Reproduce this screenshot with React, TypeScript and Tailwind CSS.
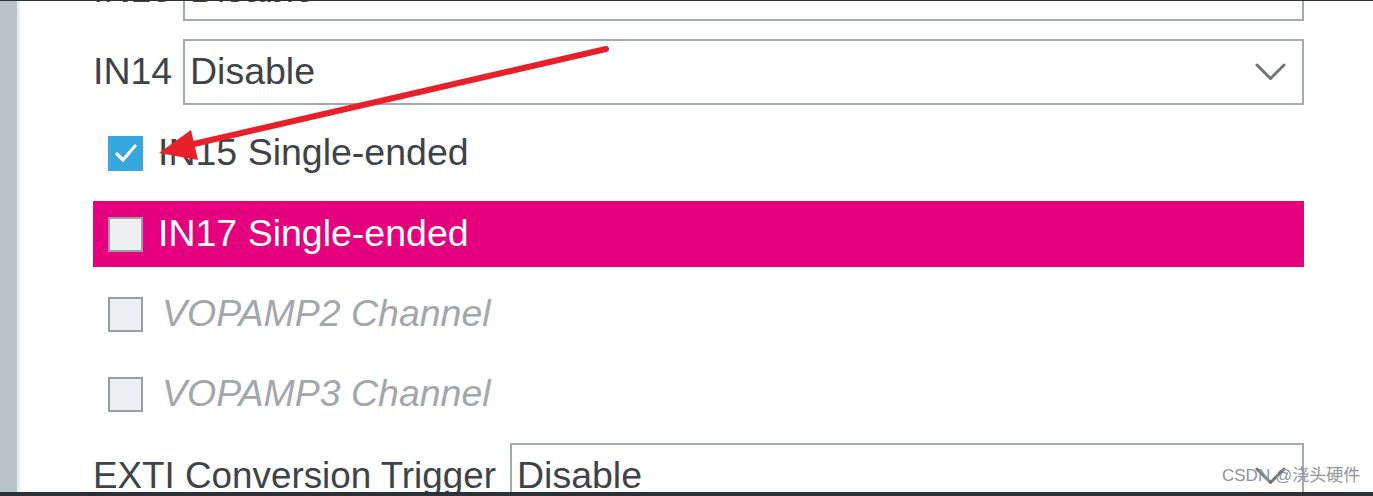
import React from 'react';

const font = { fontFamily: '"Liberation Sans", Arial, sans-serif' };

function Chevron() {
  return (
    <svg width="31" height="19" viewBox="0 0 31 19" className="shrink-0">
      <path d="M2 2 L15.5 15.5 L29 2" fill="none" stroke="#707478" strokeWidth="3" strokeLinecap="round" strokeLinejoin="round" />
    </svg>
  );
}

interface SelectRowProps {
  label: string;
  value: string;
  labelWidth: string;
  labelSize?: string;
  arrow?: boolean;
  className?: string;
}

function SelectRow({ label, value, labelWidth, labelSize = 'text-[37.5px]', arrow = true, className = '' }: SelectRowProps) {
  return (
    <div className={`flex items-center h-[66px] shrink-0 ${className}`}>
      <div className={`${labelWidth} ${labelSize} shrink-0 text-[#3f4347] leading-none whitespace-nowrap`}>{label}</div>
      <div className="flex-1 h-full border-2 border-[#a4a9ad] bg-white flex items-center justify-between pl-[5px] pr-[16px]">
        <span className="text-[37.5px] text-[#3f4347] leading-none">{value}</span>
        {arrow && <Chevron />}
      </div>
    </div>
  );
}

interface CheckRowProps {
  label: string;
  checked?: boolean;
  selected?: boolean;
  disabled?: boolean;
  className?: string;
}

function CheckRow({ label, checked, selected, disabled, className = '' }: CheckRowProps) {
  return (
    <div className={`flex items-center h-[66px] shrink-0 pl-[15px] gap-[15px] ${selected ? 'bg-[#e5007d]' : ''} ${className}`}>
      {checked ? (
        <div className="w-[35px] h-[35px] bg-[#37a8dd] flex items-center justify-center shrink-0">
          <svg width="26" height="22" viewBox="0 0 26 22">
            <path d="M4 12 L10 18 L22 4" fill="none" stroke="#fff" strokeWidth="3.2" strokeLinecap="round" strokeLinejoin="round" />
          </svg>
        </div>
      ) : (
        <div className="w-[35px] h-[35px] bg-[#eceef0] border-2 border-[#9a9fa3] shrink-0" />
      )}
      <span
        className={`text-[37.5px] leading-none ${
          selected ? 'text-white' : disabled ? 'text-[#a3a7ab] italic pl-[4px]' : 'text-[#3f4347]'
        }`}
      >
        {label}
      </span>
    </div>
  );
}

export default function App() {
  return (
    <div className="relative w-[1373px] h-[496px] overflow-hidden bg-white flex flex-col" style={font}>
      <div className="h-[1px] bg-[#2d3136] shrink-0 relative z-10" />
      <div className="flex flex-1 min-h-0 overflow-hidden">
        {/* left gutter */}
        <div className="w-[17px] bg-[#b9c4ca] shrink-0" />
        <div className="w-[3px] bg-[#e6ebee] shrink-0" />

        {/* form */}
        <div className="flex-1 pl-[73px] pr-[69px] flex flex-col -mt-[43px]">
          <SelectRow label="IN13" value="Disable" labelWidth="w-[90px]" arrow={false} className="!h-[63px]" />
          <SelectRow label="IN14" value="Disable" labelWidth="w-[90px]" className="mt-[18px]" />
          <CheckRow label="IN15 Single-ended" checked className="mt-[15px]" />
          <CheckRow label="IN17 Single-ended" selected className="mt-[15px]" />
          <CheckRow label="VOPAMP2 Channel" disabled className="mt-[14px]" />
          <CheckRow label="VOPAMP3 Channel" disabled className="mt-[14px]" />
          <SelectRow
            label="EXTI Conversion Trigger"
            value="Disable"
            labelWidth="w-[417px]"
            labelSize="text-[36.8px]"
            className="mt-[16px]"
          />
        </div>
      </div>
      <div className="h-[4px] bg-[#2d3136] shrink-0 relative z-10" />

      {/* annotation arrow */}
      <svg className="absolute left-0 top-0 pointer-events-none" width="1373" height="496">
        <line x1="606" y1="49" x2="185" y2="146" stroke="#e8202a" strokeWidth="6" strokeLinecap="round" />
        <polygon points="159,153 191,130 198,160" fill="#e8202a" />
      </svg>

      {/* watermark */}
      <div
        className="absolute left-[1222px] top-[467px] text-[17px] text-[#8f9499] leading-none"
        style={{ fontFamily: '"Liberation Sans", "Noto Sans CJK SC", sans-serif' }}
      >
        CSDN @浇头硬件
      </div>
    </div>
  );
}
